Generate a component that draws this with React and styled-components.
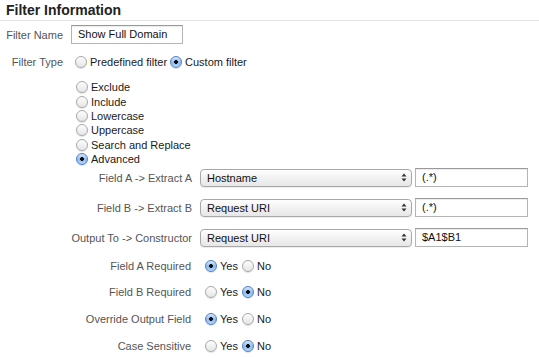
import React from "react";
import styled, { createGlobalStyle } from "styled-components";

const Global = createGlobalStyle`
  html, body { margin: 0; padding: 0; background: #fff; }
  body { font-family: "Liberation Sans", Arial, Helvetica, sans-serif; font-size: 11px; color: #222; }
`;

const Page = styled.div`
  width: 539px;
  height: 358px;
  overflow: hidden;
  background: #fff;
`;

const Title = styled.h2`
  margin: 0;
  height: 20px;
  line-height: 20px;
  padding-left: 6px;
  font-size: 14px;
  font-weight: bold;
  color: #222;
  border-bottom: 1px solid #e2e2e2;
`;

const Row = styled.div`
  display: flex;
  align-items: center;
  gap: 8px;
  height: ${(p) => p.$h || 20}px;
  margin-top: ${(p) => p.$mt || 0}px;
`;

const Label = styled.div`
  width: ${(p) => p.$w}px;
  flex: none;
  text-align: right;
  color: #555;
  white-space: nowrap;
`;

const TextInput = styled.div`
  box-sizing: border-box;
  width: ${(p) => p.$w}px;
  height: 19px;
  border: 1px solid #b4b4b4;
  border-top-color: #999;
  box-shadow: inset 0 1px 1px rgba(0, 0, 0, 0.08);
  padding: 0 6px;
  line-height: 17px;
  color: #111;
  background: #fff;
`;

const Options = styled.div`
  display: flex;
  align-items: center;
  gap: ${(p) => p.$gap || 0}px;
  margin-left: ${(p) => p.$ml || 0}px;
`;

const OptionList = styled.div`
  display: flex;
  flex-direction: column;
  margin-left: 76px;
  margin-top: 11px;
`;

const Option = styled.label`
  display: flex;
  align-items: center;
  gap: 3px;
  height: ${(p) => p.$h || 14}px;
  color: #1a1a1a;
  white-space: nowrap;
`;

const Dot = styled.span`
  box-sizing: border-box;
  flex: none;
  width: 12px;
  height: 12px;
  border-radius: 50%;
  border: 1px solid ${(p) => (p.$on ? "#4f7fc4" : "#a9a9a9")};
  background: ${(p) =>
    p.$on
      ? "radial-gradient(circle, #0d0d0d 0 1.6px, transparent 2.2px), linear-gradient(#d6e7fb, #8dbcf1 55%, #b6d6f7)"
      : "linear-gradient(#fdfdfd, #e6e6e6)"};
  box-shadow: 0 1px 1px rgba(0, 0, 0, 0.12);
`;

const Controls = styled.div`
  display: flex;
  align-items: center;
  gap: 3px;
`;

const Select = styled.div`
  box-sizing: border-box;
  display: flex;
  align-items: center;
  justify-content: space-between;
  width: 212px;
  height: 18px;
  padding: 0 4px 0 6px;
  border: 1px solid #a8a8a8;
  border-radius: 4px;
  background: linear-gradient(#ffffff, #f1f1f1 50%, #e7e7e7);
  box-shadow: 0 1px 1px rgba(0, 0, 0, 0.08);
  color: #111;
  font-size: 11px;
`;

const Radio = ({ on, children, h }) => (
  <Option $h={h}>
    <Dot $on={on} />
    {children}
  </Option>
);

const Arrows = () => (
  <svg width="6" height="9" viewBox="0 0 6 9">
    <path d="M3 0.5 L5.5 3.5 L0.5 3.5 Z" fill="#333" />
    <path d="M3 8.5 L5.5 5.5 L0.5 5.5 Z" fill="#333" />
  </svg>
);

const fieldRows = [
  { label: "Field A -> Extract A", sel: "Hostname", val: "(.*)" },
  { label: "Field B -> Extract B", sel: "Request URI", val: "(.*)" },
  { label: "Output To -> Constructor", sel: "Request URI", val: "$A1$B1" },
];

const yesNo = [
  { label: "Field A Required", yes: true },
  { label: "Field B Required", yes: false },
  { label: "Override Output Field", yes: true },
  { label: "Case Sensitive", yes: false },
];

const types = ["Exclude", "Include", "Lowercase", "Uppercase", "Search and Replace", "Advanced"];

export default function App() {
  return (
    <Page>
      <Global />
      <Title>Filter Information</Title>
      <Row $h={19} $mt={4}>
        <Label $w={63}>Filter Name</Label>
        <TextInput $w={112}>Show Full Domain</TextInput>
      </Row>
      <Row $h={14} $mt={11}>
        <Label $w={63}>Filter Type</Label>
        <Options $gap={3} $ml={4}>
          <Radio>Predefined filter</Radio>
          <Radio on>Custom filter</Radio>
        </Options>
      </Row>
      <OptionList>
        {types.map((t) => (
          <Radio key={t} on={t === "Advanced"} h={14.4}>
            {t}
          </Radio>
        ))}
      </OptionList>
      {fieldRows.map((r, i) => (
        <Row key={r.label} $h={20} $mt={i === 0 ? 1.5 : 10}>
          <Label $w={192}>{r.label}</Label>
          <Controls>
            <Select>
              <span>{r.sel}</span>
              <Arrows />
            </Select>
            <TextInput $w={113}>{r.val}</TextInput>
          </Controls>
        </Row>
      ))}
      <div style={{ height: 4.6 }} />
      {yesNo.map((r) => (
        <Row key={r.label} $h={26.7}>
          <Label $w={191}>{r.label}</Label>
          <Options $gap={4} $ml={6}>
            <Radio on={r.yes}>Yes</Radio>
            <Radio on={!r.yes}>No</Radio>
          </Options>
        </Row>
      ))}
    </Page>
  );
}
